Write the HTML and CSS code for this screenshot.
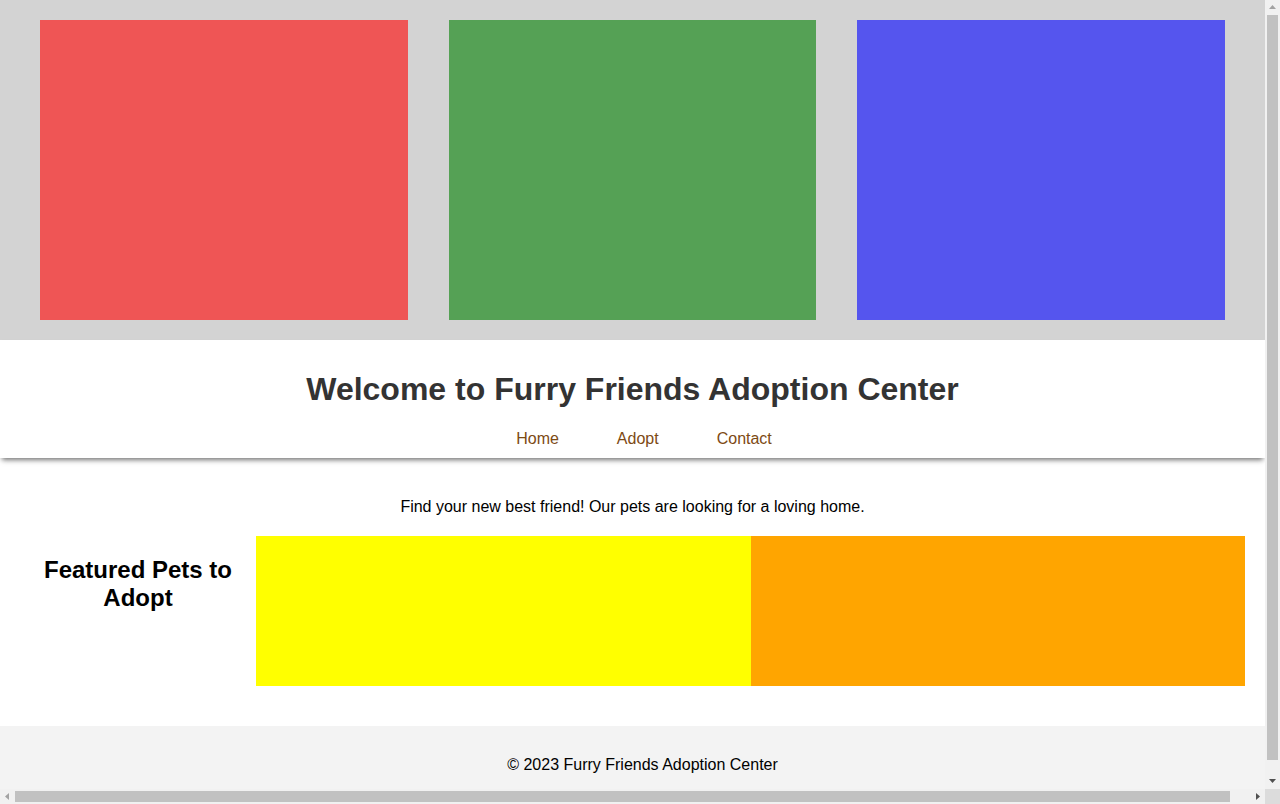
FILE: index.html
```html
<!DOCTYPE html>
<html lang="en">
<head>
<meta charset="utf-8">
<title>Furry Friends Adoption Center</title>
<link rel="stylesheet" href="styles.css">
</head>
<body>
<div class="page">
  <section class="gallery">
    <div class="tile tile-red"></div>
    <div class="tile tile-green"></div>
    <div class="tile tile-blue"></div>
  </section>
  <header class="site-header">
    <h1 class="title">Welcome to Furry Friends Adoption Center</h1>
    <nav class="nav">
      <a href="#" class="nav-link">Home</a>
      <a href="#" class="nav-link">Adopt</a>
      <a href="#" class="nav-link">Contact</a>
    </nav>
  </header>
  <main class="content">
    <p class="intro">Find your new best friend! Our pets are looking for a loving home.</p>
    <section class="featured">
      <aside class="featured-side">
        <h2 class="featured-title">Featured Pets to Adopt</h2>
      </aside>
      <div class="featured-grid">
        <div class="pet pet-yellow"></div>
        <div class="pet pet-orange"></div>
      </div>
    </section>
  </main>
  <footer class="site-footer">
    <p class="copy">© 2023 Furry Friends Adoption Center</p>
  </footer>
</div>

<div class="vscroll" aria-hidden="true">
  <svg class="arrow arrow-up" width="7" height="4" viewBox="0 0 7 4"><polygon points="3.5,0 7,4 0,4" fill="#a3a3a3"/></svg>
  <div class="vthumb"></div>
  <svg class="arrow arrow-down" width="7" height="4" viewBox="0 0 7 4"><polygon points="0,0 7,0 3.5,4" fill="#505050"/></svg>
</div>
<div class="hscroll" aria-hidden="true">
  <svg class="arrow arrow-left" width="4" height="7" viewBox="0 0 4 7"><polygon points="4,0 4,7 0,3.5" fill="#a3a3a3"/></svg>
  <div class="hthumb"></div>
  <svg class="arrow arrow-right" width="4" height="7" viewBox="0 0 4 7"><polygon points="0,0 4,3.5 0,7" fill="#505050"/></svg>
</div>
<div class="scroll-corner" aria-hidden="true"></div>
</body>
</html>
```

FILE: styles.css
```css
html, body {
  margin: 0;
  padding: 0;
}
body {
  font-family: "Liberation Sans", Arial, sans-serif;
  font-size: 16px;
  color: #000;
  background: #fff;
  overflow: hidden;
}
.page {
  width: 1265px;
}
.gallery {
  background: #d3d3d3;
  padding: 20px 40px;
  display: grid;
  grid-template-columns: repeat(3, 1fr);
  gap: 41px;
}
.tile {
  height: 300px;
}
.tile-red { background: #ef5555; }
.tile-green { background: #55a155; }
.tile-blue { background: #5555ee; }

.site-header {
  background: #fff;
  padding: 10px 0 10px;
  text-align: center;
  box-shadow: 0 4px 5px -2px rgba(0, 0, 0, 0.55);
}
.title {
  margin: 21px 0;
  font-size: 32px;
  font-weight: bold;
  color: #333;
}
.nav {
  display: flex;
  justify-content: center;
  gap: 58px;
  padding: 1px 0 0 23px;
}
.nav-link {
  color: #7d4a14;
  text-decoration: none;
  line-height: 18px;
}

.content {
  padding: 20px 20px 40px;
}
.intro {
  margin: 20px 0;
  text-align: center;
}
.featured {
  display: flex;
}
.featured-side {
  width: 236px;
  flex: none;
  text-align: center;
}
.featured-title {
  margin: 20px 0;
  font-size: 24px;
  font-weight: bold;
}
.featured-grid {
  flex: 1;
  display: grid;
  grid-template-columns: 1fr 1fr;
}
.pet {
  height: 150px;
}
.pet-yellow { background: #ffff00; }
.pet-orange { background: #ffa500; }

.site-footer {
  background: #f3f3f3;
  width: 100%;
  padding: 14px 10px 12px;
  text-align: center;
}
.copy {
  margin: 16px 0;
}

/* emulated browser scrollbars */
.vscroll {
  position: fixed;
  top: 0;
  right: 0;
  width: 15px;
  height: 789px;
  background: #f1f1f1;
}
.vthumb {
  position: absolute;
  left: 2px;
  top: 15px;
  width: 11px;
  height: 745px;
  background: #c1c1c1;
}
.hscroll {
  position: fixed;
  left: 0;
  bottom: 0;
  width: 1265px;
  height: 15px;
  background: #f1f1f1;
}
.hthumb {
  position: absolute;
  top: 2px;
  left: 15px;
  width: 1215px;
  height: 11px;
  background: #c1c1c1;
}
.scroll-corner {
  position: fixed;
  right: 0;
  bottom: 0;
  width: 15px;
  height: 15px;
  background: #dcdcdc;
}
.arrow {
  position: absolute;
  display: block;
}
.arrow-up { left: 4px; top: 5px; }
.arrow-down { left: 4px; bottom: 6px; }
.arrow-left { left: 5px; top: 4px; }
.arrow-right { right: 5px; top: 4px; }
```
